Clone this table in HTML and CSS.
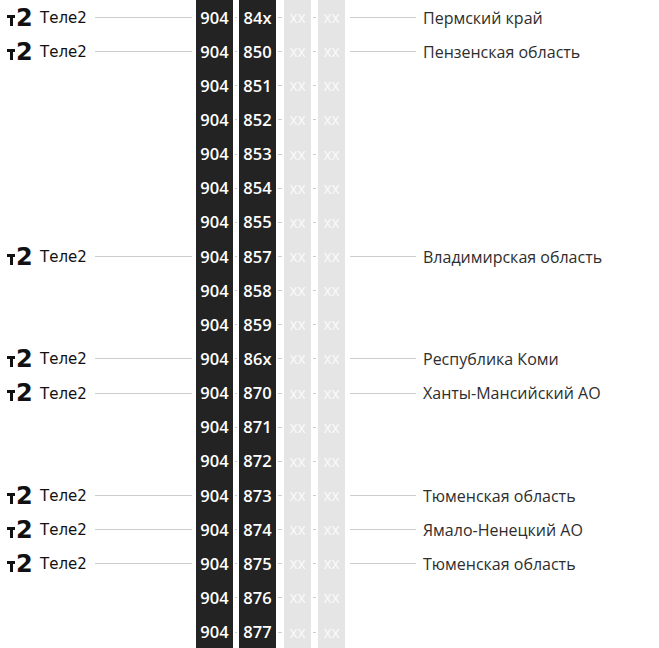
FILE: index.html
```html
<!DOCTYPE html>
<html lang="ru">
<head>
<meta charset="utf-8">
<title>Коды 904</title>
<link rel="stylesheet" href="styles.css">
</head>
<body>
<div class="table">
  <div class="row op"><div class="oper"><span class="logo"><span class="t"></span><span class="two">2</span></span><span class="name">Теле2</span></div><div class="lead"></div><div class="c dark">904</div><div class="j1"></div><div class="c dark">84x</div><div class="j2"></div><div class="c light">xx</div><div class="j3"></div><div class="c light">xx</div><div class="trail"></div><div class="region">Пермский край</div></div>
  <div class="row op"><div class="oper"><span class="logo"><span class="t"></span><span class="two">2</span></span><span class="name">Теле2</span></div><div class="lead"></div><div class="c dark">904</div><div class="j1"></div><div class="c dark">850</div><div class="j2"></div><div class="c light">xx</div><div class="j3"></div><div class="c light">xx</div><div class="trail"></div><div class="region">Пензенская область</div></div>
  <div class="row"><div class="oper"></div><div class="lead"></div><div class="c dark">904</div><div class="j1"></div><div class="c dark">851</div><div class="j2"></div><div class="c light">xx</div><div class="j3"></div><div class="c light">xx</div></div>
  <div class="row"><div class="oper"></div><div class="lead"></div><div class="c dark">904</div><div class="j1"></div><div class="c dark">852</div><div class="j2"></div><div class="c light">xx</div><div class="j3"></div><div class="c light">xx</div></div>
  <div class="row"><div class="oper"></div><div class="lead"></div><div class="c dark">904</div><div class="j1"></div><div class="c dark">853</div><div class="j2"></div><div class="c light">xx</div><div class="j3"></div><div class="c light">xx</div></div>
  <div class="row"><div class="oper"></div><div class="lead"></div><div class="c dark">904</div><div class="j1"></div><div class="c dark">854</div><div class="j2"></div><div class="c light">xx</div><div class="j3"></div><div class="c light">xx</div></div>
  <div class="row"><div class="oper"></div><div class="lead"></div><div class="c dark">904</div><div class="j1"></div><div class="c dark">855</div><div class="j2"></div><div class="c light">xx</div><div class="j3"></div><div class="c light">xx</div></div>
  <div class="row op"><div class="oper"><span class="logo"><span class="t"></span><span class="two">2</span></span><span class="name">Теле2</span></div><div class="lead"></div><div class="c dark">904</div><div class="j1"></div><div class="c dark">857</div><div class="j2"></div><div class="c light">xx</div><div class="j3"></div><div class="c light">xx</div><div class="trail"></div><div class="region">Владимирская область</div></div>
  <div class="row"><div class="oper"></div><div class="lead"></div><div class="c dark">904</div><div class="j1"></div><div class="c dark">858</div><div class="j2"></div><div class="c light">xx</div><div class="j3"></div><div class="c light">xx</div></div>
  <div class="row"><div class="oper"></div><div class="lead"></div><div class="c dark">904</div><div class="j1"></div><div class="c dark">859</div><div class="j2"></div><div class="c light">xx</div><div class="j3"></div><div class="c light">xx</div></div>
  <div class="row op"><div class="oper"><span class="logo"><span class="t"></span><span class="two">2</span></span><span class="name">Теле2</span></div><div class="lead"></div><div class="c dark">904</div><div class="j1"></div><div class="c dark">86x</div><div class="j2"></div><div class="c light">xx</div><div class="j3"></div><div class="c light">xx</div><div class="trail"></div><div class="region">Республика Коми</div></div>
  <div class="row op"><div class="oper"><span class="logo"><span class="t"></span><span class="two">2</span></span><span class="name">Теле2</span></div><div class="lead"></div><div class="c dark">904</div><div class="j1"></div><div class="c dark">870</div><div class="j2"></div><div class="c light">xx</div><div class="j3"></div><div class="c light">xx</div><div class="trail"></div><div class="region">Ханты-Мансийский АО</div></div>
  <div class="row"><div class="oper"></div><div class="lead"></div><div class="c dark">904</div><div class="j1"></div><div class="c dark">871</div><div class="j2"></div><div class="c light">xx</div><div class="j3"></div><div class="c light">xx</div></div>
  <div class="row"><div class="oper"></div><div class="lead"></div><div class="c dark">904</div><div class="j1"></div><div class="c dark">872</div><div class="j2"></div><div class="c light">xx</div><div class="j3"></div><div class="c light">xx</div></div>
  <div class="row op"><div class="oper"><span class="logo"><span class="t"></span><span class="two">2</span></span><span class="name">Теле2</span></div><div class="lead"></div><div class="c dark">904</div><div class="j1"></div><div class="c dark">873</div><div class="j2"></div><div class="c light">xx</div><div class="j3"></div><div class="c light">xx</div><div class="trail"></div><div class="region">Тюменская область</div></div>
  <div class="row op"><div class="oper"><span class="logo"><span class="t"></span><span class="two">2</span></span><span class="name">Теле2</span></div><div class="lead"></div><div class="c dark">904</div><div class="j1"></div><div class="c dark">874</div><div class="j2"></div><div class="c light">xx</div><div class="j3"></div><div class="c light">xx</div><div class="trail"></div><div class="region">Ямало-Ненецкий АО</div></div>
  <div class="row op"><div class="oper"><span class="logo"><span class="t"></span><span class="two">2</span></span><span class="name">Теле2</span></div><div class="lead"></div><div class="c dark">904</div><div class="j1"></div><div class="c dark">875</div><div class="j2"></div><div class="c light">xx</div><div class="j3"></div><div class="c light">xx</div><div class="trail"></div><div class="region">Тюменская область</div></div>
  <div class="row"><div class="oper"></div><div class="lead"></div><div class="c dark">904</div><div class="j1"></div><div class="c dark">876</div><div class="j2"></div><div class="c light">xx</div><div class="j3"></div><div class="c light">xx</div></div>
  <div class="row"><div class="oper"></div><div class="lead"></div><div class="c dark">904</div><div class="j1"></div><div class="c dark">877</div><div class="j2"></div><div class="c light">xx</div><div class="j3"></div><div class="c light">xx</div></div>
</div>
</body>
</html>
```
FILE: styles.css
```css
html, body {
  margin: 0;
  padding: 0;
  background: #ffffff;
}

.table {
  display: flex;
  flex-direction: column;
}

.row {
  display: flex;
  align-items: stretch;
  height: 34.15px;
}

.oper {
  width: 95px;
  box-sizing: border-box;
  padding-left: 7px;
  display: flex;
  align-items: center;
}

.logo {
  display: flex;
  align-items: flex-end;
  width: 33px;
  height: 18px;
  margin-top: 1px;
}

.logo .t {
  position: relative;
  width: 8px;
  height: 11px;
  margin-right: 1px;
  margin-bottom: 1px;
}

.logo .t::before {
  content: "";
  position: absolute;
  left: 0;
  top: 0;
  width: 8px;
  height: 3px;
  background: #111;
}

.logo .t::after {
  content: "";
  position: absolute;
  left: 3px;
  top: 0;
  width: 3px;
  height: 11px;
  background: #111;
}

.logo .two {
  font-family: "DejaVu Sans", sans-serif;
  font-weight: 700;
  font-size: 24px;
  line-height: 18px;
  color: #111;
  letter-spacing: -1px;
}

.name {
  font-family: "DejaVu Sans", sans-serif;
  font-size: 15px;
  color: #111;
  margin-top: 2px;
}

.lead, .trail, .j1, .j2, .j3 {
  position: relative;
}

.lead {
  width: 101px;
}

.j1 { width: 6px; }
.j2 { width: 8px; }
.j3 { width: 7px; }

.trail {
  width: 78px;
}

.row.op .lead::after,
.row.op .trail::after,
.j1::after, .j2::after, .j3::after {
  content: "";
  position: absolute;
  top: 50%;
  height: 1px;
  background: #cdcdcd;
}

.row.op .lead::after { left: 0; right: 4px; }
.row.op .trail::after { left: 5px; right: 7px; }
.j1::after, .j2::after, .j3::after { left: 2px; right: 2px; }

.c {
  display: flex;
  align-items: center;
  justify-content: center;
  font-family: "Open Sans", sans-serif;
  font-weight: 600;
  font-size: 16.5px;
  color: #ffffff;
}

.dark {
  width: 37px;
  background: #232323;
}

.light {
  width: 27px;
  background: #e5e5e5;
  color: #fafafa;
  font-weight: 400;
  font-size: 15.5px;
}

.region {
  display: flex;
  align-items: center;
  font-family: "Open Sans", sans-serif;
  font-size: 16px;
  color: #2e2e2e;
  padding-top: 1px;
}
```
